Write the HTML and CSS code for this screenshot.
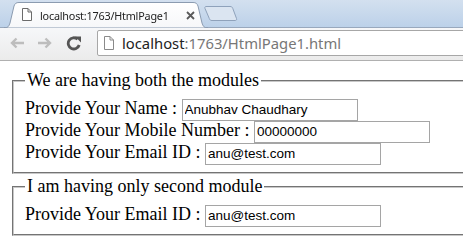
FILE: index.html
```html
<!DOCTYPE html>
<html lang="en">
<head>
    <meta charset="UTF-8">
    <meta name="viewport" content="width=device-width, initial-scale=1.0">
    <title>HtmlPage1</title>
    <link rel="stylesheet" href="styles.css">
</head>
<body>
    <div class="browser">
        <div class="tabstrip">
            <div class="tab">
                <svg class="tab-shape" width="204" height="26" viewBox="0 0 204 26">
                    <defs>
                        <linearGradient id="tabfill" x1="0" y1="0" x2="0" y2="1">
                            <stop offset="0" stop-color="#ffffff"/>
                            <stop offset="1" stop-color="#f6f7f9"/>
                        </linearGradient>
                    </defs>
                    <path d="M0 26 C4 26 5 24 6 21 L10 4 C11 1.5 12 0.5 15 0.5 L189 0.5 C192 0.5 193 1.5 194 4 L198 21 C199 24 200 26 204 26 Z" fill="url(#tabfill)" stroke="#8b9bb0" stroke-width="1"/>
                </svg>
                <svg class="favicon" width="10" height="13" viewBox="0 0 10 13">
                    <path d="M0.5 0.5 H6 L9.5 4 V12.5 H0.5 Z M6 0.5 V4 H9.5" fill="#fff" stroke="#6b6b6b" stroke-width="1"/>
                </svg>
                <span class="tab-title">localhost:1763/HtmlPage1</span>
                <svg class="tab-close" width="9" height="9" viewBox="0 0 9 9">
                    <path d="M1 1 L8 8 M8 1 L1 8" stroke="#5a5a5a" stroke-width="1.8"/>
                </svg>
            </div>
            <svg class="newtab" width="34" height="15" viewBox="0 0 34 15">
                <path d="M2 0.5 H26 C27.5 0.5 28.3 1 28.8 2.5 L32.5 12.5 C33 14 32 14.5 31 14.5 H8 C6.5 14.5 5.8 14 5.3 12.5 L1 2.5 C0.6 1.3 1 0.5 2 0.5 Z" fill="#dbe5f1" stroke="#8fa2bb" stroke-width="1"/>
            </svg>
        </div>

        <div class="toolbar">
            <div class="nav-buttons">
                <svg class="nav-icon" width="14" height="12" viewBox="0 0 14 12">
                    <path d="M14 6 H2.5 M6.5 1.5 L2 6 L6.5 10.5" fill="none" stroke="#bdbdbd" stroke-width="2.4"/>
                </svg>
                <svg class="nav-icon" width="14" height="12" viewBox="0 0 14 12">
                    <path d="M0 6 H11.5 M7.5 1.5 L12 6 L7.5 10.5" fill="none" stroke="#bdbdbd" stroke-width="2.4"/>
                </svg>
                <svg class="nav-icon reload" width="16" height="16" viewBox="0 0 16 16">
                    <path d="M13.2 10 A5.6 5.6 0 1 1 11.6 4.2" fill="none" stroke="#555" stroke-width="2.8"/>
                    <path d="M9 1.5 L15 1.5 L15 7.5 Z" fill="#555"/>
                </svg>
            </div>
            <div class="omnibox">
                <svg class="omni-icon" width="10" height="14" viewBox="0 0 10 14">
                    <path d="M0.5 0.5 H6 L9.5 4 V13.5 H0.5 Z M6 0.5 V4 H9.5" fill="#fff" stroke="#8a8a8a" stroke-width="1"/>
                </svg>
                <span class="url"><span class="host">localhost</span><span class="path">:1763/HtmlPage1.html</span></span>
            </div>
        </div>

        <div class="page">
            <fieldset>
                <legend>We are having both the modules</legend>
                <div class="row">Provide Your Name : <input type="text" value="Anubhav Chaudhary"></div>
                <div class="row">Provide Your Mobile Number : <input type="text" value="00000000"></div>
                <div class="row">Provide Your Email ID : <input type="text" value="anu@test.com"></div>
            </fieldset>
            <fieldset>
                <legend>I am having only second module</legend>
                <div class="row">Provide Your Email ID : <input type="text" value="anu@test.com"></div>
            </fieldset>
        </div>
    </div>
</body>
</html>
```

FILE: styles.css
```css
html, body {
    margin: 0;
    padding: 0;
    overflow: hidden;
    background: #fff;
}
.browser {
    width: 463px;
    height: 249px;
    overflow: hidden;
}
.tabstrip {
    height: 27px;
    display: flex;
    align-items: flex-start;
    background: linear-gradient(to bottom, #d3e0ef, #bcd1e9);
    border-bottom: 1px solid #98a8bd;
}
.tab {
    position: relative;
    width: 204px;
    height: 26px;
    margin: 2px 0 0 4px;
    display: flex;
    align-items: center;
    flex: none;
    z-index: 2;
}
.tab-shape {
    position: absolute;
    left: 0;
    top: 0;
}
.favicon {
    position: relative;
    flex: none;
    margin: 0 0 1px 18px;
}
.tab-title {
    position: relative;
    flex: none;
    width: 142px;
    margin-left: 8px;
    overflow: hidden;
    white-space: nowrap;
    font-family: "Noto Sans", sans-serif;
    font-size: 10.8px;
    letter-spacing: -0.2px;
    color: #222;
    -webkit-mask-image: linear-gradient(to right, #000 130px, rgba(0, 0, 0, 0.25) 140px);
    mask-image: linear-gradient(to right, #000 130px, rgba(0, 0, 0, 0.25) 140px);
}
.tab-close {
    position: relative;
    flex: none;
    margin: 0 0 0 4px;
}
.newtab {
    flex: none;
    margin: 6px 0 0 -4px;
}
.toolbar {
    height: 32px;
    display: flex;
    align-items: flex-start;
    background: linear-gradient(to bottom, #f6f7f9, #ebebeb);
    border-bottom: 1px solid #b0b0b0;
}
.nav-buttons {
    display: flex;
    align-items: center;
    height: 26px;
    margin-top: 2px;
    flex: none;
}
.nav-icon {
    margin-left: 10px;
}
.nav-icon + .nav-icon {
    margin-left: 14px;
}
.nav-icon.reload {
    margin-left: 14px;
}
.omnibox {
    flex: none;
    width: 420px;
    height: 24px;
    margin: 2px 0 0 15px;
    display: flex;
    align-items: center;
    background: #fff;
    border: 1px solid #a7a7a7;
    border-radius: 2px;
}
.omni-icon {
    margin-left: 6px;
}
.url {
    margin-left: 8px;
    font-family: "Noto Sans", sans-serif;
    font-size: 14.8px;
    white-space: nowrap;
}
.host {
    color: #222;
}
.path {
    color: #777;
}
.page {
    width: 640px;
    padding: 9px 0 0 10px;
    font-family: "Liberation Serif", serif;
    font-size: 18px;
    color: #000;
}
fieldset {
    margin: 0 2px 2px;
    padding: 6px 12px 9px 11px;
    border: 2px groove #c8c8c8;
}
legend {
    padding: 0 2px;
}
.row {
    height: 22px;
    line-height: 22px;
    white-space: nowrap;
}
input {
    box-sizing: border-box;
    width: 176px;
    height: 22px;
    padding: 1px 2px;
    border: 1px solid #a5a5a5;
    font-family: "Liberation Sans", sans-serif;
    font-size: 13.5px;
    color: #000;
    vertical-align: baseline;
}
```
